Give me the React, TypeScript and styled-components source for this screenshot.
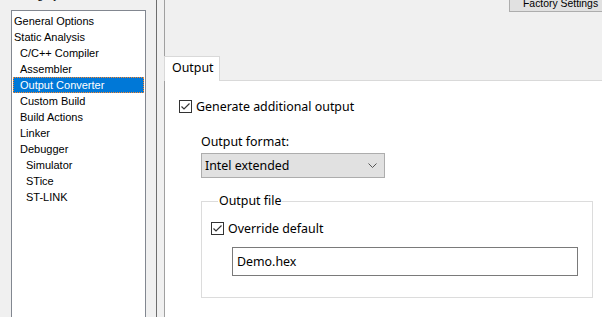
import React from "react";
import styled, { createGlobalStyle } from "styled-components";

const GlobalStyle = createGlobalStyle`
  html, body {
    margin: 0;
    padding: 0;
    background: #f0f0f0;
  }
`;

interface TreeItem {
  label: string;
  level: number;
}

const categories: TreeItem[] = [
  { label: "General Options", level: 0 },
  { label: "Static Analysis", level: 0 },
  { label: "C/C++ Compiler", level: 1 },
  { label: "Assembler", level: 1 },
  { label: "Output Converter", level: 1 },
  { label: "Custom Build", level: 1 },
  { label: "Build Actions", level: 1 },
  { label: "Linker", level: 1 },
  { label: "Debugger", level: 1 },
  { label: "Simulator", level: 2 },
  { label: "STice", level: 2 },
  { label: "ST-LINK", level: 2 },
];

const CheckMark = () => (
  <svg width="11" height="11" viewBox="0 0 11 11">
    <polyline points="1.5,5.5 4,8 9.5,2.5" fill="none" stroke="#333" strokeWidth="1.2" />
  </svg>
);

const Chevron = () => (
  <svg width="9" height="5" viewBox="0 0 9 5">
    <polyline points="0.5,0.5 4.5,4.5 8.5,0.5" fill="none" stroke="#555" strokeWidth="1" />
  </svg>
);

export default function App() {
  const selected = "Output Converter";

  return (
    <>
      <GlobalStyle />
      <Window>
        <LeftPane>
          <CategoryLabel>Category:</CategoryLabel>
          <TreeBox>
            {categories.map((item) => (
              <TreeRow key={item.label} $level={item.level} $selected={item.label === selected}>
                {item.label}
              </TreeRow>
            ))}
          </TreeBox>
        </LeftPane>
        <Splitter />
        <RightPane>
          <TopBar>
            <FactoryButton>Factory Settings</FactoryButton>
          </TopBar>
          <TabStrip>
            <Tab>Output</Tab>
          </TabStrip>
          <TabPage>
            <CheckRow>
              <CheckBox>
                <CheckMark />
              </CheckBox>
              <span>Generate additional output</span>
            </CheckRow>
            <Section>
              <FieldLabel>Output format:</FieldLabel>
              <Select>
                <span>Intel extended</span>
                <Chevron />
              </Select>
              <GroupBox>
                <Legend>Output file</Legend>
                <CheckRow>
                  <CheckBox>
                    <CheckMark />
                  </CheckBox>
                  <span>Override default</span>
                </CheckRow>
                <TextInput>Demo.hex</TextInput>
              </GroupBox>
            </Section>
          </TabPage>
        </RightPane>
      </Window>
    </>
  );
}

const Window = styled.div`
  display: flex;
  width: 602px;
  height: 317px;
  overflow: hidden;
  background: #f0f0f0;
`;

const LeftPane = styled.div`
  width: 145px;
  flex-shrink: 0;
  padding-left: 11px;
  display: flex;
  flex-direction: column;
`;

const CategoryLabel = styled.div`
  font: 11px "Liberation Sans", Arial, sans-serif;
  color: #000;
  height: 13px;
  line-height: 13px;
  margin-top: -11px;
  margin-left: 3px;
  margin-bottom: 8px;
`;

const TreeBox = styled.div`
  width: 133px;
  flex: 1;
  margin-bottom: -20px;
  background: #fff;
  border: 1px solid #828790;
  padding-top: 2px;
  display: flex;
  flex-direction: column;
`;

const TreeRow = styled.div<{ $level: number; $selected: boolean }>`
  height: 16px;
  font: 11px/16px "Liberation Sans", Arial, sans-serif;
  margin: 0 1px;
  padding-left: ${(p) => 1 + p.$level * 6}px;
  color: ${(p) => (p.$selected ? "#fff" : "#000")};
  background: ${(p) => (p.$selected ? "#0078d7" : "transparent")};
  outline: ${(p) => (p.$selected ? "1px dotted #ff8728" : "none")};
  outline-offset: -1px;
  white-space: nowrap;
`;

const Splitter = styled.div`
  width: 1px;
  flex-shrink: 0;
  background: #6d6d6d;
  margin-right: 7px;
`;

const RightPane = styled.div`
  flex: 1;
  display: flex;
  flex-direction: column;
  border-left: 1px solid #a0a0a0;
  font: 12.4px "Noto Sans", "Segoe UI", sans-serif;
  color: #000;
`;

const TopBar = styled.div`
  height: 56px;
  display: flex;
  justify-content: flex-end;
  align-items: flex-start;
`;

const FactoryButton = styled.div`
  width: 100px;
  height: 22px;
  margin-top: -10px;
  margin-right: -7px;
  box-sizing: border-box;
  border: 1px solid #adadad;
  background: #e1e1e1;
  font: 10.4px "Liberation Sans", Arial, sans-serif;
  padding: 7px 0 0 13px;
  white-space: nowrap;
`;

const TabStrip = styled.div`
  display: flex;
  height: 24px;
  margin-left: -1px;
`;

const Tab = styled.div`
  width: 56px;
  box-sizing: border-box;
  height: 25px;
  border: 1px solid #d9d9d9;
  border-bottom: none;
  background: #fff;
  padding-left: 7px;
  line-height: 22px;
  position: relative;
  z-index: 1;
`;

const TabPage = styled.div`
  flex: 1;
  background: #fff;
  border-top: 1px solid #d9d9d9;
  padding: 19px 0 0 14px;
`;

const CheckRow = styled.div`
  display: flex;
  align-items: center;
  gap: 4px;
  height: 13px;
  white-space: nowrap;
`;

const CheckBox = styled.div`
  width: 13px;
  height: 13px;
  box-sizing: border-box;
  border: 1px solid #333;
  background: #fff;
  display: flex;
  align-items: center;
  justify-content: center;
`;

const Section = styled.div`
  padding-left: 22px;
  margin-top: 21px;
`;

const FieldLabel = styled.div`
  height: 16px;
  line-height: 16px;
`;

const Select = styled.div`
  margin-top: 3px;
  width: 184px;
  height: 25px;
  box-sizing: border-box;
  border: 1px solid #adadad;
  background: #e1e1e1;
  display: flex;
  align-items: center;
  justify-content: space-between;
  padding: 0 7px 0 3px;
`;

const GroupBox = styled.fieldset`
  margin: 15px 0 0 0;
  width: 392px;
  height: 105px;
  box-sizing: border-box;
  border: 1px solid #dcdcdc;
  padding: 0 0 0 9px;
  ${CheckRow} {
    margin-top: 13px;
  }
`;

const Legend = styled.legend`
  margin-left: 7px;
  padding: 0 1px;
  height: 16px;
  line-height: 16px;
`;

const TextInput = styled.div`
  margin: 12px 0 0 21px;
  width: 346px;
  height: 29px;
  box-sizing: border-box;
  border: 1px solid #7a7a7a;
  padding-left: 4px;
  line-height: 27px;
`;
